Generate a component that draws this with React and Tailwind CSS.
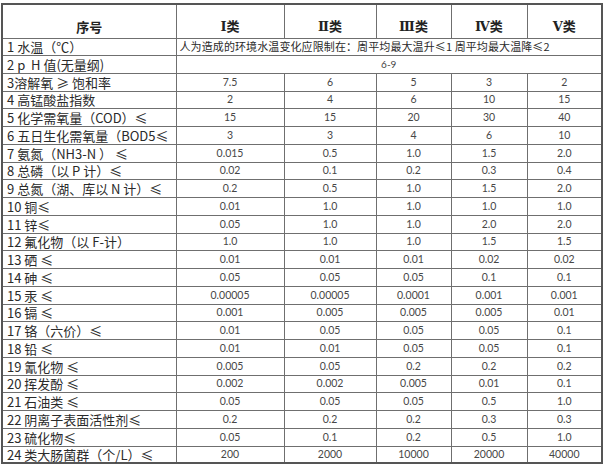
const HEADERS = ["Ⅰ类", "Ⅱ类", "Ⅲ类", "Ⅳ类", "Ⅴ类"];

const ROWS = [
  ["3溶解氧 ≥ 饱和率", ["7.5", "6", "5", "3", "2"]],
  ["4 高锰酸盐指数", ["2", "4", "6", "10", "15"]],
  ["5 化学需氧量（COD）≤", ["15", "15", "20", "30", "40"]],
  ["6 五日生化需氧量（BOD5≤", ["3", "3", "4", "6", "10"]],
  ["7 氨氮（NH3-N ） ≤", ["0.015", "0.5", "1.0", "1.5", "2.0"]],
  ["8 总磷（以 P 计）≤", ["0.02", "0.1", "0.2", "0.3", "0.4"]],
  ["9 总氮（湖、库以 N 计）≤", ["0.2", "0.5", "1.0", "1.5", "2.0"]],
  ["10 铜≤", ["0.01", "1.0", "1.0", "1.0", "1.0"]],
  ["11 锌≤", ["0.05", "1.0", "1.0", "2.0", "2.0"]],
  ["12 氟化物（以 F-计）", ["1.0", "1.0", "1.0", "1.5", "1.5"]],
  ["13 硒 ≤", ["0.01", "0.01", "0.01", "0.02", "0.02"]],
  ["14 砷 ≤", ["0.05", "0.05", "0.05", "0.1", "0.1"]],
  ["15 汞 ≤", ["0.00005", "0.00005", "0.0001", "0.001", "0.001"]],
  ["16 镉 ≤", ["0.001", "0.005", "0.005", "0.005", "0.01"]],
  ["17 铬（六价）≤", ["0.01", "0.05", "0.05", "0.05", "0.1"]],
  ["18 铅 ≤", ["0.01", "0.01", "0.05", "0.05", "0.1"]],
  ["19 氰化物 ≤", ["0.005", "0.05", "0.2", "0.2", "0.2"]],
  ["20 挥发酚 ≤", ["0.002", "0.002", "0.005", "0.01", "0.1"]],
  ["21 石油类 ≤", ["0.05", "0.05", "0.05", "0.5", "1.0"]],
  ["22 阴离子表面活性剂≤", ["0.2", "0.2", "0.2", "0.3", "0.3"]],
  ["23 硫化物≤", ["0.05", "0.1", "0.2", "0.5", "1.0"]],
  ["24 类大肠菌群（个/L）≤", ["200", "2000", "10000", "20000", "40000"]],
];

const cjk = "font-['Noto_Sans_CJK_SC',sans-serif]";
const head = "font-['DejaVu_Serif','Noto_Sans_CJK_SC',serif]";
const num = "font-['Lato','Noto_Sans_CJK_SC',sans-serif]";
const cell = "border border-[#6f6f6f] p-0";

function rowHeight(i) {
  return i % 4 === 3 ? "h-[17px]" : "h-[18px]";
}

function LabelCell({ children }) {
  return (
    <td className={`${cell} pl-[4px] text-[13px] leading-none text-[#2a2a2a] whitespace-nowrap ${cjk}`}>
      {children}
    </td>
  );
}

export default function App() {
  return (
    <div className="w-[605px] h-[465px] bg-white overflow-hidden pt-[3px] pl-[1px]">
      <table className="table-fixed border-collapse w-[600px] border-2 border-[#555]">
        <colgroup>
          <col className="w-[174px]" />
          <col className="w-[108px]" />
          <col className="w-[92px]" />
          <col className="w-[75px]" />
          <col className="w-[76px]" />
          <col className="w-[75px]" />
        </colgroup>
        <thead>
          <tr className="h-[34px]">
            <th className={`${cell} align-bottom pb-[5px] text-[13px] font-bold leading-none text-[#222] ${cjk}`}>
              序号
            </th>
            {HEADERS.map((h) => (
              <th
                key={h}
                className={`${cell} align-bottom pb-[5px] text-[13px] font-bold leading-none text-[#222] ${head}`}
              >
                {h}
              </th>
            ))}
          </tr>
        </thead>
        <tbody>
          <tr className="h-[17px]">
            <LabelCell>1 水温（℃）</LabelCell>
            <td
              colSpan={5}
              className={`${cell} pl-[3px] text-[11px] tracking-[0.1px] leading-none text-[#2a2a2a] whitespace-nowrap ${cjk}`}
            >
              人为造成的环境水温变化应限制在：周平均最大温升≤1 周平均最大温降≤2
            </td>
          </tr>
          <tr className="h-[18px]">
            <LabelCell>2 p&nbsp; H 值(无量纲)</LabelCell>
            <td colSpan={5} className={`${cell} text-center text-[10px] leading-none text-[#444] ${num}`}>
              6-9
            </td>
          </tr>
          {ROWS.map(([label, values], i) => (
            <tr key={label} className={rowHeight(i + 2)}>
              <LabelCell>{label}</LabelCell>
              {values.map((v, j) => (
                <td
                  key={j}
                  className={`${cell} text-center text-[10.5px] leading-none text-[#474747] ${num}`}
                >
                  {v}
                </td>
              ))}
            </tr>
          ))}
        </tbody>
      </table>
    </div>
  );
}
